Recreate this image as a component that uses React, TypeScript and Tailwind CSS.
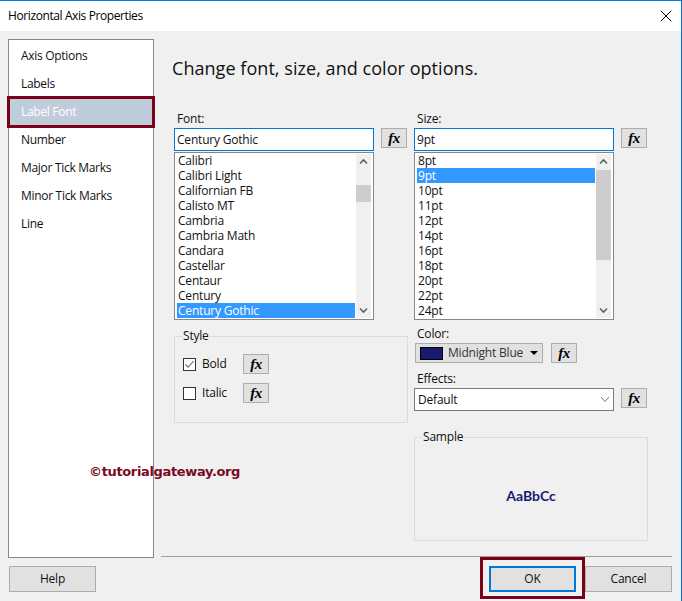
import { X } from "lucide-react";

const fonts = [
  "Calibri",
  "Calibri Light",
  "Californian FB",
  "Calisto MT",
  "Cambria",
  "Cambria Math",
  "Candara",
  "Castellar",
  "Centaur",
  "Century",
  "Century Gothic",
];
const sizes = ["8pt", "9pt", "10pt", "11pt", "12pt", "14pt", "16pt", "18pt", "20pt", "22pt", "24pt"];
const navItems = ["Axis Options", "Labels", "Label Font", "Number", "Major Tick Marks", "Minor Tick Marks", "Line"];

function FxButton() {
  return (
    <button className="flex h-[20px] w-[26px] shrink-0 items-center justify-center border border-[#adadad] bg-[#e1e1e1] font-['Liberation_Serif',serif] text-[15px] font-bold tracking-[-0.5px] italic leading-none text-black">
      fx
    </button>
  );
}

function Arrow({ down = false }: { down?: boolean }) {
  return (
    <svg width="9" height="7" viewBox="0 0 9 7" className={down ? "rotate-180" : ""}>
      <path d="M1 5.5 L4.5 2 L8 5.5" fill="none" stroke="#606060" strokeWidth="1.6" />
    </svg>
  );
}

function ListBox({
  items,
  selected,
  thumbTop,
  thumbHeight,
}: {
  items: string[];
  selected: string;
  thumbTop: number;
  thumbHeight: number;
}) {
  return (
    <div className="mt-px flex h-[168px] w-[200px] border border-[#828790] bg-white py-px pl-px">
      <div className="-mt-px w-[179px] pl-px">
        {items.map((item) => (
          <div
            key={item}
            className={`h-[15px] pl-px leading-[15px] ${item === selected ? "bg-[#3399ff] text-white" : "text-[#111]"}`}
          >
            {item}
          </div>
        ))}
      </div>
      <div className="ml-px flex h-full w-[15px] flex-col bg-[#f0f0f0]">
        <div className="flex h-[15px] items-center justify-center">
          <Arrow />
        </div>
        <div className="flex-1">
          <div className="w-full bg-[#cdcdcd]" style={{ marginTop: thumbTop, height: thumbHeight }} />
        </div>
        <div className="flex h-[15px] items-center justify-center">
          <Arrow down />
        </div>
      </div>
    </div>
  );
}

function DialogButton({ label, primary = false }: { label: string; primary?: boolean }) {
  return (
    <button
      className={`h-[26px] w-[87px] bg-[#e1e1e1] text-[#111] ${primary ? "border-2 border-[#0078d7]" : "border border-[#adadad]"}`}
    >
      {label}
    </button>
  );
}

export default function App() {
  return (
    <div className="relative flex h-[601px] w-[682px] flex-col border-t border-r border-[#0078d7] bg-[#f0f0f0] font-['Open_Sans',sans-serif] text-[12px] tracking-[-0.2px] text-[#111]">
      <div className="flex h-[30px] shrink-0 items-center justify-between bg-white pr-[5px] pl-[8px]">
        <span className="tracking-[-0.4px] text-black">Horizontal Axis Properties</span>
        <X size={20} strokeWidth={1.2} className="text-black" />
      </div>

      <div className="flex flex-1">
        <div className="flex w-[161px] shrink-0 flex-col pl-[8px]">
          <div className="mt-[8px] h-[519px] w-[146px] border border-[#828790] bg-white pt-[2px] tracking-[-0.3px]">
            {navItems.map((item) => (
              <div
                key={item}
                className={`relative h-[28px] pl-[12px] leading-[28px] ${item === "Label Font" ? "bg-[#bfcddb] text-white" : ""}`}
              >
                {item}
                {item === "Label Font" && (
                  <div className="absolute top-[-2px] right-[-2px] bottom-[-2px] left-[-2px] border-[3px] border-[#7b0019]" />
                )}
              </div>
            ))}
          </div>
          <div className="mt-[8px] ml-px w-[87px]">
            <DialogButton label="Help" />
          </div>
        </div>

        <div className="flex flex-1 flex-col">
          <h1 className="mt-[24px] ml-[11px] text-[18px] leading-[26px] tracking-[0.05px] text-[#111]">
            Change font, size, and color options.
          </h1>
          <div className="mt-[29px] ml-[13px] flex h-[446px] gap-[7px]">
            <div className="w-[233px]">
              <div className="ml-[3px] h-[18px] leading-[18px]">Font:</div>
              <div className="flex gap-[7px]">
                <div className="h-[23px] w-[200px] border border-[#0078d7] bg-white pl-[2px] leading-[21px]">
                  Century Gothic
                </div>
                <FxButton />
              </div>
              <ListBox items={fonts} selected="Century Gothic" thumbTop={16} thumbHeight={17} />
              <fieldset className="mt-[8px] h-[95px] w-[234px] border border-[#dcdcdc] pl-[8px]">
                <legend className="ml-[-1px] px-px leading-[16px]">Style</legend>
                <div className="mt-[10px] flex h-[20px] items-center">
                  <div className="flex h-[13px] w-[13px] items-center justify-center border border-[#333] bg-white">
                    <svg width="11" height="11" viewBox="0 0 11 11">
                      <path d="M1.5 5.5 L4.2 8.2 L9.5 2.2" fill="none" stroke="#777" strokeWidth="1.2" />
                    </svg>
                  </div>
                  <span className="ml-[6px] w-[41px]">Bold</span>
                  <FxButton />
                </div>
                <div className="mt-[9px] flex h-[20px] items-center">
                  <div className="h-[13px] w-[13px] border border-[#333] bg-white" />
                  <span className="ml-[6px] w-[41px]">Italic</span>
                  <FxButton />
                </div>
              </fieldset>
            </div>

            <div className="w-[233px]">
              <div className="ml-[3px] h-[18px] leading-[18px]">Size:</div>
              <div className="flex gap-[7px]">
                <div className="h-[23px] w-[200px] border border-[#0078d7] bg-white pl-[2px] leading-[21px]">9pt</div>
                <FxButton />
              </div>
              <ListBox items={sizes} selected="9pt" thumbTop={1} thumbHeight={90} />
              <div className="mt-[5px] ml-[3px] h-[18px] leading-[18px]">Color:</div>
              <div className="ml-px flex gap-[8px]">
                <div className="flex h-[20px] w-[128px] items-center border border-[#adadad] bg-[#e1e1e1] pl-[4px]">
                  <div className="h-[13px] w-[23px] border border-black bg-[#191970]" />
                  <span className="ml-[5px] text-[#333]">Midnight Blue</span>
                  <div className="ml-[7px] h-0 w-0 border-x-[4px] border-t-[4px] border-x-transparent border-t-black" />
                </div>
                <FxButton />
              </div>
              <div className="mt-[6px] ml-[3px] h-[19px] leading-[19px]">Effects:</div>
              <div className="flex gap-[7px]">
                <div className="flex h-[23px] w-[200px] items-center justify-between border border-[#7a7a7a] bg-white pr-[3px] pl-[3px]">
                  <span>Default</span>
                  <svg width="10" height="7" viewBox="0 0 10 7">
                    <path d="M1 1 L5 5.5 L9 1" fill="none" stroke="#777" strokeWidth="1" />
                  </svg>
                </div>
                <FxButton />
              </div>
              <fieldset className="mt-[18px] h-[112px] w-[234px] border border-[#dcdcdc] pl-[8px]">
                <legend className="ml-[-1px] px-px leading-[16px]">Sample</legend>
                <div className="mt-[42px] pr-[8px] text-center font-['Lato',sans-serif] text-[14px] leading-[18px] font-bold tracking-normal text-[#191970]">
                  AaBbCc
                </div>
              </fieldset>
            </div>
          </div>
          <div className="mr-[9px] h-px bg-[#a0a0a0]" />
          <div className="mt-[9px] mr-[9px] flex justify-end">
            <div className="relative">
              <DialogButton label="OK" primary />
              <div className="absolute top-[-9px] right-[-9px] bottom-[-7px] left-[-9px] border-[3px] border-[#7b0019]" />
            </div>
            <div className="ml-[9px]">
              <DialogButton label="Cancel" />
            </div>
          </div>
        </div>
      </div>

      <div className="absolute top-[462px] left-[89px] font-['DejaVu_Sans',sans-serif] text-[13px] leading-[18px] font-bold tracking-[-0.35px] text-[#7b0a24]">
        ©tutorialgateway.org
      </div>
    </div>
  );
}
